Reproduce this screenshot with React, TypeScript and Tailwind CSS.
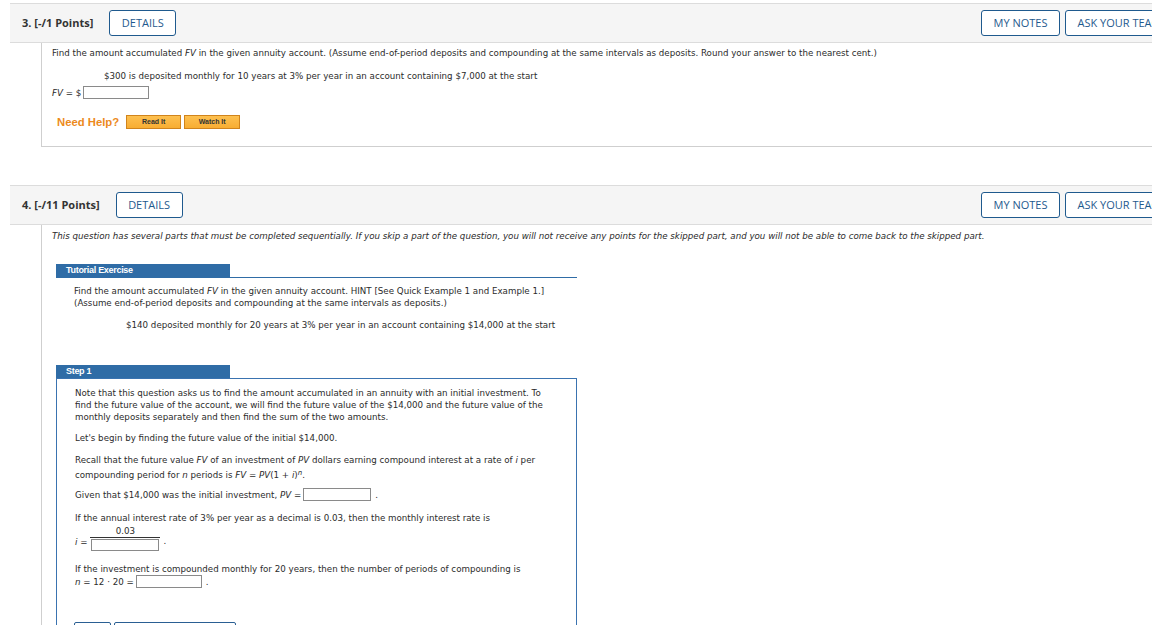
const body = "font-['DejaVu_Sans',Verdana,sans-serif] text-[8.7px] text-[#2b2b2b]"

function HeadButton({ children, className = '' }: { children: React.ReactNode; className?: string }) {
  return (
    <div
      className={`flex h-[26px] items-center rounded-[3px] border border-[#1f5a8e] bg-white px-[11.5px] text-[11px] text-[#1f5a8e] font-['Open_Sans',sans-serif] ${className}`}
    >
      {children}
    </div>
  )
}

function QuestionHeader({ label }: { label: string }) {
  return (
    <div className="flex h-10 w-[1207px] items-center border-y border-[#dcdcdc] bg-[#f5f5f5] px-3">
      <span className="font-['Open_Sans',sans-serif] text-[11px] font-bold text-[#333]">{label}</span>
      <HeadButton className="ml-4">DETAILS</HeadButton>
      <div className="ml-auto flex gap-[5px]">
        <HeadButton>MY NOTES</HeadButton>
        <HeadButton className="w-[140px]">ASK YOUR TEACHER</HeadButton>
      </div>
    </div>
  )
}

function Box({ w }: { w: string }) {
  return <span className={`inline-block h-[13px] ${w} border border-[#8a8a8a] bg-white align-middle`} />
}

function HelpButton({ children, w }: { children: React.ReactNode; w: string }) {
  return (
    <span
      className={`flex h-[14px] ${w} items-center justify-center border border-[#d1841c] bg-gradient-to-b from-[#fdc04f] to-[#f8ad32] font-['Liberation_Sans',Arial,sans-serif] text-[7px] font-bold text-[#333]`}
    >
      {children}
    </span>
  )
}

export default function App() {
  return (
    <div className="h-[625px] w-[1152px] overflow-hidden bg-white">
      {/* question 3 */}
      <div className="ml-[10px] mt-[3px]">
        <QuestionHeader label="3. [-/1 Points]" />
        <div className={`ml-[31px] h-[104px] border-b border-l border-[#cfcfcf] pl-[10px] pt-[4px] ${body}`}>
          <p className="leading-3">
            Find the amount accumulated <i>FV</i> in the given annuity account. (Assume end-of-period deposits and compounding at the same intervals as deposits. Round your answer to the nearest cent.)
          </p>
          <p className="mt-[11px] pl-[52px] leading-3">
            $300 is deposited monthly for 10 years at 3% per year in an account containing $7,000 at the start
          </p>
          <div className="mt-[4px] flex items-center gap-[2px] leading-3">
            <span>
              <i>FV</i> = $
            </span>
            <Box w="w-[66px]" />
          </div>
          <div className="ml-[5px] mt-[15px] flex items-center">
            <span className="mr-[7px] font-['Liberation_Sans',Arial,sans-serif] text-[11.3px] font-bold text-[#ec8a1c]">Need Help?</span>
            <HelpButton w="w-[55px]">Read It</HelpButton>
            <span className="w-[3px]" />
            <HelpButton w="w-[56px]">Watch It</HelpButton>
          </div>
        </div>
      </div>

      {/* question 4 */}
      <div className="ml-[10px] mt-[38px]">
        <QuestionHeader label="4. [-/11 Points]" />
        <div className={`ml-[31px] h-[500px] border-l border-[#cfcfcf] pl-[10px] pt-[5px] ${body}`}>
          <p className="italic leading-3">
            This question has several parts that must be completed sequentially. If you skip a part of the question, you will not receive any points for the skipped part, and you will not be able to come back to the skipped part.
          </p>

          <div className="ml-[4px] mt-[22px] w-[521px]">
            <div className="border-b border-[#2f6ca6]">
              <div className="flex h-[13px] w-[174px] items-center bg-[#2f6ca6] pl-[10px] font-['Liberation_Sans',Arial,sans-serif] text-[9px] font-bold tracking-[-0.3px] text-white">
                Tutorial Exercise
              </div>
            </div>
            <div className="pl-[18px] pt-[7px]">
              <p className="leading-3">
                Find the amount accumulated <i>FV</i> in the given annuity account. HINT [See Quick Example 1 and Example 1.]
                <br />
                (Assume end-of-period deposits and compounding at the same intervals as deposits.)
              </p>
              <p className="mt-[10px] pl-[52px] leading-3">
                $140 deposited monthly for 20 years at 3% per year in an account containing $14,000 at the start
              </p>
            </div>

            <div className="mt-[34px] flex h-[13px] w-[174px] items-center bg-[#2f6ca6] pl-[10px] font-['Liberation_Sans',Arial,sans-serif] text-[9px] font-bold tracking-[-0.3px] text-white">
              Step 1
            </div>
            <div className="h-[260px] border border-[#3a73b0] pl-[18px] pr-[20px] pt-[8px]">
              <p className="leading-3">
                Note that this question asks us to find the amount accumulated in an annuity with an initial investment. To find the future value of the account, we will find the future value of the $14,000 and the future value of the monthly deposits separately and then find the sum of the two amounts.
              </p>
              <p className="mt-[9px] leading-3">Let's begin by finding the future value of the initial $14,000.</p>
              <p className="mt-[9px] leading-[15px]">
                Recall that the future value <i>FV</i> of an investment of <i>PV</i> dollars earning compound interest at a rate of <i>i</i> per
                <br />
                compounding period for <i>n</i> periods is <i>FV</i> = <i>PV</i>(1 + <i>i</i>)<sup className="text-[7px]"><i>n</i></sup>.
              </p>
              <div className="mt-[5px] flex items-center gap-[2px] leading-3">
                <span>
                  Given that $14,000 was the initial investment, <i>PV</i> =
                </span>
                <Box w="w-[68px]" />
                <span className="ml-[2px]">.</span>
              </div>
              <p className="mt-[11px] leading-3">
                If the annual interest rate of 3% per year as a decimal is 0.03, then the monthly interest rate is
              </p>
              <div className="mt-[1px] flex items-center gap-[3px]">
                <span className="mt-[10px]">
                  <i>i</i> =
                </span>
                <span className="flex flex-col items-center">
                  <span className="leading-[12px]">0.03</span>
                  <span className="h-px w-[70px] bg-[#333]" />
                  <span className="mt-[1px] h-[12px] w-[68px] border border-[#8a8a8a]" />
                </span>
                <span className="mt-[8px]">.</span>
              </div>
              <p className="mt-[12px] leading-3">
                If the investment is compounded monthly for 20 years, then the number of periods of compounding is
              </p>
              <div className="flex items-center gap-[2px] leading-3">
                <span>
                  <i>n</i> = 12 · 20 =
                </span>
                <Box w="w-[66px]" />
                <span className="ml-[2px]">.</span>
              </div>
              <div className="-ml-px mt-[34px] flex gap-[3px]">
                <span className="h-6 w-[37px] rounded-[2px] border border-[#2a5f93]" />
                <span className="h-6 w-[122px] rounded-[2px] border border-[#2a5f93]" />
              </div>
            </div>
          </div>
        </div>
      </div>
    </div>
  )
}
